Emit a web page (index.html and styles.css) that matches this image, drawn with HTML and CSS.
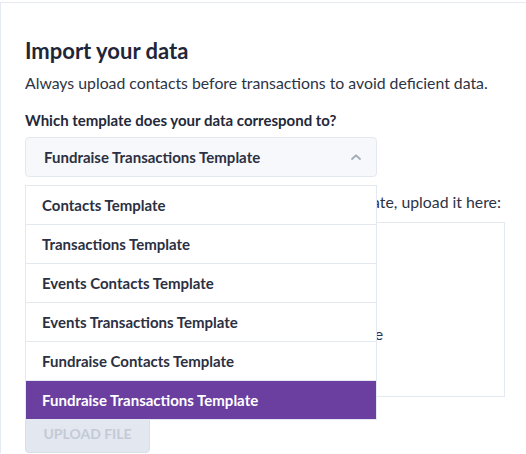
FILE: index.html
```html
<!DOCTYPE html>
<html lang="en">
<head>
<meta charset="utf-8">
<title>Import your data</title>
<link rel="stylesheet" href="styles.css">
</head>
<body>
<main class="card">
  <h1 class="title">Import your data</h1>
  <p class="lead">Always upload contacts before transactions to avoid deficient data.</p>
  <label class="label">Which template does your data correspond to?</label>
  <div class="select-wrap">
    <button class="select" type="button">
      <span>Fundraise Transactions Template</span>
      <svg class="chev" width="10" height="6" viewBox="0 0 10 6"><path d="M1 5 L5 1.3 L9 5" fill="none" stroke="#a0aab9" stroke-width="1.8" stroke-linecap="round" stroke-linejoin="round"/></svg>
    </button>
    <ul class="menu">
      <li class="option">Contacts Template</li>
      <li class="option">Transactions Template</li>
      <li class="option">Events Contacts Template</li>
      <li class="option">Events Transactions Template</li>
      <li class="option">Fundraise Contacts Template</li>
      <li class="option selected">Fundraise Transactions Template</li>
    </ul>
  </div>
  <p class="hint">Once you have downloaded and filled in the template, upload it here:</p>
  <div class="dropzone">
    <span class="drop-text">Click or drag and drop your file here</span>
  </div>
  <button class="upload" type="button" disabled>UPLOAD FILE</button>
</main>
</body>
</html>
```

FILE: styles.css
```css
html, body {
  margin: 0;
  padding: 0;
  background: #ffffff;
  overflow: hidden;
}

body {
  font-family: Lato, "Open Sans", "Liberation Sans", sans-serif;
  color: #2d3344;
  padding-top: 2px;
}

.card {
  width: 480px;
  border-top: 1px solid #e4e9f2;
  border-left: 1px solid #e4e9f2;
  padding: 33px 24px 0 24px;
  display: flex;
  flex-direction: column;
}

.title {
  margin: 0 0 6px 0;
  font-size: 22px;
  line-height: 29px;
  font-weight: 700;
  color: #1f2638;
}

.lead {
  margin: 0 0 15px 0;
  font-size: 15.8px;
  line-height: 24px;
  color: #2d3344;
}

.label {
  font-size: 15px;
  line-height: 20px;
  font-weight: 700;
  color: #23293a;
  margin-bottom: 7px;
}

.select-wrap {
  position: relative;
  width: 352px;
}

.select {
  width: 352px;
  height: 40px;
  box-sizing: border-box;
  display: flex;
  align-items: center;
  justify-content: space-between;
  padding: 0 15px 0 18px;
  background: #f7f8fb;
  border: 1px solid #e4e8f0;
  border-radius: 4px;
  font-family: inherit;
  font-size: 15px;
  font-weight: 700;
  color: #2b3042;
  cursor: pointer;
}

.chev {
  display: block;
}

.menu {
  position: absolute;
  left: 0;
  top: 48px;
  width: 352px;
  box-sizing: border-box;
  margin: 0;
  padding: 0;
  list-style: none;
  background: #ffffff;
  border: 1px solid #e4e8f0;
  z-index: 5;
}

.option {
  height: 38px;
  display: flex;
  align-items: center;
  padding-left: 16px;
  font-size: 15px;
  font-weight: 700;
  color: #2b3042;
  border-bottom: 1px solid #e4e8f0;
}

.option:last-child {
  border-bottom: none;
}

.option.selected {
  background: #6b3fa0;
  color: #ffffff;
}

.hint {
  margin: 13px 0 8px 0;
  font-size: 15.8px;
  line-height: 24px;
  color: #2d3344;
  white-space: nowrap;
}

.dropzone {
  height: 175px;
  box-sizing: border-box;
  border: 1px solid #e4e8f0;
  display: flex;
  justify-content: center;
  align-items: flex-start;
  padding-top: 99px;
  padding-right: 14px;
}

.drop-text {
  font-size: 16px;
  line-height: 24px;
  color: #2d3344;
}

.upload {
  margin-top: 16px;
  align-self: flex-start;
  width: 125px;
  height: 40px;
  background: #e3e7ef;
  border: 1px solid #d9dee7;
  border-radius: 4px;
  font-family: inherit;
  font-size: 14px;
  font-weight: 700;
  color: #c3cad6;
  padding: 0;
}
```
